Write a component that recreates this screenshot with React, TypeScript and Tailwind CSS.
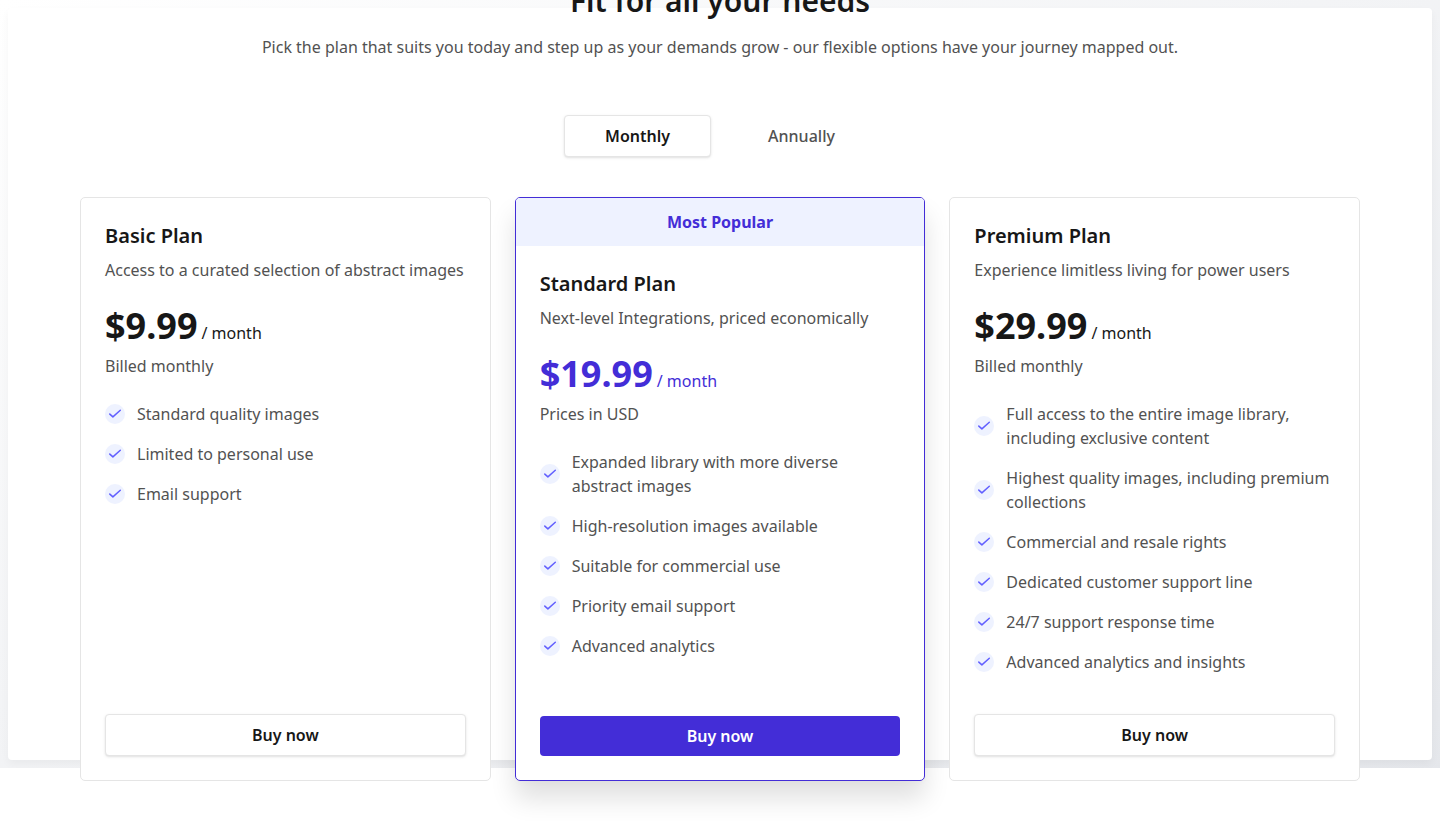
import React from 'react';

type Plan = {
  name: string;
  blurb: string;
  price: string;
  note: string;
  features: string[];
  popular?: boolean;
};

const plans: Plan[] = [
  {
    name: 'Basic Plan',
    blurb: 'Access to a curated selection of abstract images',
    price: '$9.99',
    note: 'Billed monthly',
    features: ['Standard quality images', 'Limited to personal use', 'Email support'],
  },
  {
    name: 'Standard Plan',
    blurb: 'Next-level Integrations, priced economically',
    price: '$19.99',
    note: 'Prices in USD',
    popular: true,
    features: [
      'Expanded library with more diverse abstract images',
      'High-resolution images available',
      'Suitable for commercial use',
      'Priority email support',
      'Advanced analytics',
    ],
  },
  {
    name: 'Premium Plan',
    blurb: 'Experience limitless living for power users',
    price: '$29.99',
    note: 'Billed monthly',
    features: [
      'Full access to the entire image library, including exclusive content',
      'Highest quality images, including premium collections',
      'Commercial and resale rights',
      'Dedicated customer support line',
      '24/7 support response time',
      'Advanced analytics and insights',
    ],
  },
];

function Check() {
  return (
    <span className="flex size-5 shrink-0 rounded-full bg-indigo-50">
      <svg viewBox="0 0 20 20" className="size-5 fill-none stroke-indigo-500" strokeWidth="1.5" strokeLinecap="round" strokeLinejoin="round">
        <path d="M4.8 10.1L7.9 12.9L15.3 6.3" />
      </svg>
    </span>
  );
}

function PlanCard({ plan }: { plan: Plan }) {
  const hot = plan.popular;
  return (
    <div
      className={
        hot
          ? 'flex h-[584px] flex-1 flex-col overflow-hidden rounded-[5px] border border-indigo-700 bg-white shadow-[0_18px_26px_0_rgba(0,0,0,0.12),0_2px_6px_0_rgba(0,0,0,0.02)]'
          : 'flex h-[584px] flex-1 flex-col rounded-[5px] border border-neutral-200 bg-white'
      }
    >
      {hot && (
        <div className="flex h-12 shrink-0 items-center justify-center bg-indigo-50 font-bold text-indigo-700">
          Most Popular
        </div>
      )}
      <div className="flex flex-1 flex-col p-6">
        <h2 className="text-xl leading-7 font-semibold text-neutral-900">{plan.name}</h2>
        <p className="mt-2 whitespace-nowrap text-neutral-600">{plan.blurb}</p>
        <div className={hot ? 'mt-6 flex items-baseline gap-1 text-indigo-700' : 'mt-6 flex items-baseline gap-1 text-neutral-900'}>
          <span className="text-4xl leading-10 font-bold">{plan.price}</span>
          <span className="text-base">/ month</span>
        </div>
        <p className="mt-2 text-neutral-600">{plan.note}</p>
        <ul className="mt-6 flex flex-col gap-4">
          {plan.features.map((f) => (
            <li key={f} className="flex items-center gap-3 text-neutral-600">
              <Check />
              <span>{f}</span>
            </li>
          ))}
        </ul>
        <button
          className={
            hot
              ? 'mt-auto h-10 w-full shrink-0 rounded-[4px] bg-indigo-700 font-semibold text-white'
              : 'mt-auto h-[42px] w-full shrink-0 rounded-[4px] border border-neutral-200 bg-white font-semibold text-neutral-900 shadow-sm'
          }
        >
          Buy now
        </button>
      </div>
    </div>
  );
}

export default function App() {
  return (
    <div className="grid h-[821px] grid-cols-1 grid-rows-1 overflow-hidden bg-white font-['Noto_Sans',sans-serif] text-base leading-6 antialiased">
      <div className="col-start-1 row-start-1 h-[768px] overflow-hidden bg-linear-to-br from-white to-gray-200 p-2">
        <div className="h-full rounded-[4px] bg-white shadow-[0_4px_8px_0_rgba(0,0,0,0.04)]" />
      </div>
      <div className="relative col-start-1 row-start-1 flex flex-col px-20">
        <h1 className="-mt-5 text-center text-3xl leading-[42px] font-semibold text-neutral-900">Fit for all your needs</h1>
        <p className="mt-[13px] text-center text-neutral-600">
          Pick the plan that suits you today and step up as your demands grow - our flexible options have your journey mapped out.
        </p>
        <div className="mt-14 flex justify-center gap-4">
          <button className="h-[42px] w-[147px] rounded-[4px] border border-neutral-200 bg-white font-semibold text-neutral-900 shadow-sm">Monthly</button>
          <button className="h-[42px] w-[149px] font-medium text-neutral-600">Annually</button>
        </div>
        <div className="mt-10 flex gap-6">
          {plans.map((p) => (
            <PlanCard key={p.name} plan={p} />
          ))}
        </div>
      </div>
    </div>
  );
}
